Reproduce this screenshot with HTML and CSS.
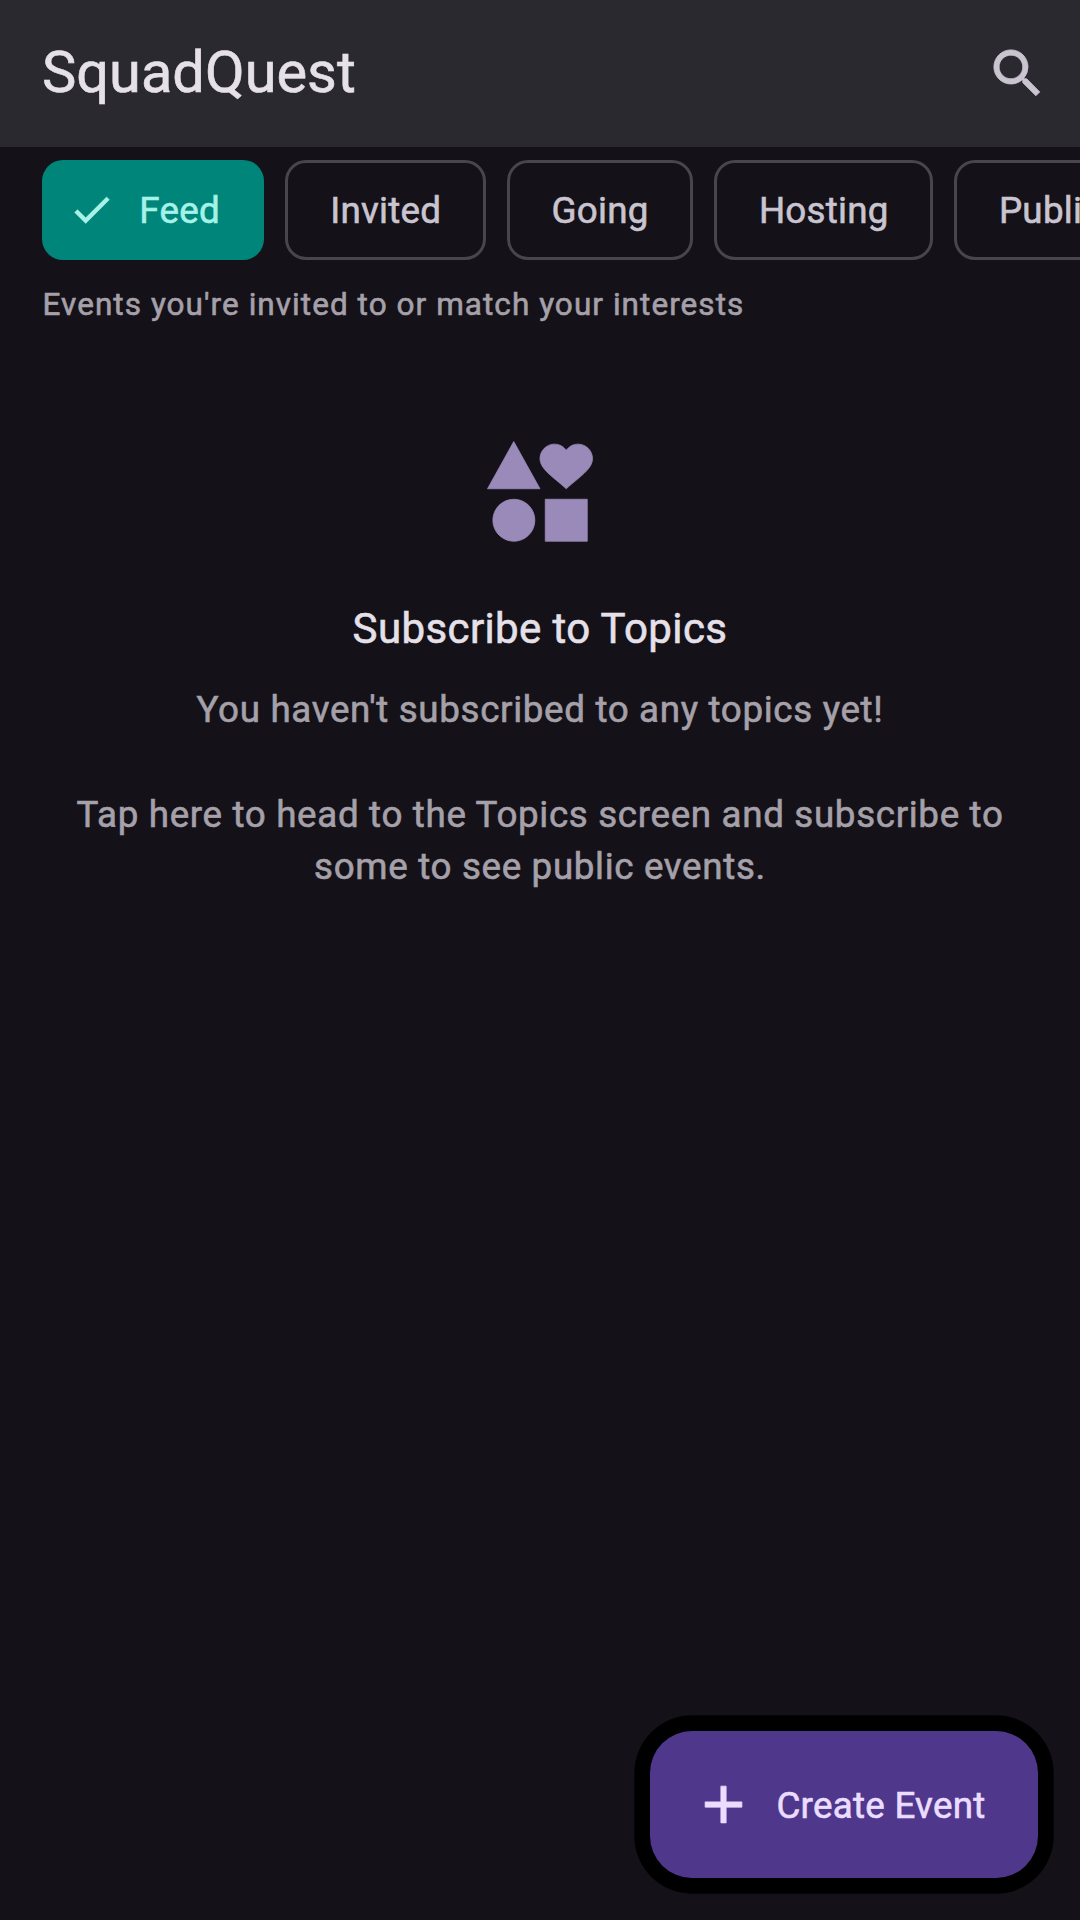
FILE: index.html
```html
<!DOCTYPE html>
<html lang="en">
<head>
<meta charset="utf-8">
<title>SquadQuest</title>
<link rel="stylesheet" href="styles.css">
</head>
<body>
<div class="screen">
  <header class="app-bar">
    <h1 class="app-title">SquadQuest</h1>
    <svg class="icon search" viewBox="0 0 24 24" aria-label="Search"><path d="M15.5 14h-.79l-.28-.27A6.47 6.47 0 0 0 16 9.5 6.5 6.5 0 1 0 9.5 16c1.61 0 3.09-.59 4.23-1.57l.27.28v.79l5 4.99L20.49 19l-4.99-5zm-6 0C7.01 14 5 11.99 5 9.5S7.01 5 9.5 5 14 7.01 14 9.5 11.99 14 9.5 14z"/></svg>
  </header>
  <nav class="chips">
    <div class="chip selected"><svg class="check" viewBox="0 0 24 24"><path d="M9 16.17L4.83 12l-1.42 1.41L9 19 21 7l-1.41-1.41z"/></svg><span>Feed</span></div>
    <div class="chip">Invited</div>
    <div class="chip">Going</div>
    <div class="chip">Hosting</div>
    <div class="chip">Public</div>
  </nav>
  <p class="caption">Events you're invited to or match your interests</p>
  <main class="empty">
    <svg class="interests" viewBox="0 0 24 24"><path d="M7.02 13c-2.21 0-4 1.79-4 4s1.79 4 4 4 4-1.79 4-4-1.79-4-4-4zM13 13v8h8v-8h-8zM7 2l-5 9h10L7 2zM19.25 2.5c-1.06 0-1.81.56-2.25 1.17-.44-.61-1.19-1.17-2.25-1.17C13.19 2.5 12 3.78 12 5.25c0 2 2.42 3.42 5 5.75 2.58-2.33 5-3.75 5-5.75 0-1.47-1.19-2.75-2.75-2.75z"/></svg>
    <h2 class="empty-title">Subscribe to Topics</h2>
    <p class="empty-text">You haven't subscribed to any topics yet!<br><br>Tap here to head to the Topics screen and subscribe to some to see public events.</p>
  </main>
  <div class="actions">
    <button class="fab"><svg class="icon" viewBox="0 0 24 24"><path d="M19 13h-6v6h-2v-6H5v-2h6V5h2v6h6v2z"/></svg><span class="fab-label">Create Event</span></button>
  </div>
</div>
</body>
</html>
```
FILE: styles.css
```css
* { box-sizing: border-box; margin: 0; }

body {
  background: #141218;
  font-family: Roboto, sans-serif;
  color: #e6e0e9;
  -webkit-text-stroke: .6px currentColor;
}

svg {
  display: block;
  flex: none;
  fill: currentColor;
  stroke: currentColor;
  stroke-width: .3;
}

.screen {
  width: 1080px;
  height: 1920px;
  display: flex;
  flex-direction: column;
  overflow: hidden;
}

.app-bar {
  flex: none;
  height: 147px;
  padding: 0 31.5px 1px 42px;
  display: flex;
  align-items: center;
  justify-content: space-between;
  background: #2b2930;
  color: #cac4d0;
}

.app-title {
  padding-bottom: 3px;
  font-size: 57.75px;
  font-weight: 400;
  line-height: 74px;
  color: #e6e0e9;
}

.icon { width: 63px; height: 63px; }

.chips {
  flex: none;
  display: flex;
  gap: 21px;
  padding: 13px 0 0 42px;
}

.chip {
  flex: none;
  height: 100px;
  padding: 1px 41.2px 0 42px;
  display: flex;
  align-items: center;
  border: 3px solid #49454f;
  border-radius: 21px;
  font-size: 36.75px;
  font-weight: 400;
  letter-spacing: .26px;
  color: #cac4d0;
}

.chip.selected {
  border: 0;
  padding: 0 44.3px 0 26px;
  gap: 24px;
  background: #00857b;
  color: #a5f2e7;
}

.check { width: 47.25px; height: 47.25px; }

.caption {
  padding: 24px 42.5px 0;
  font-size: 31.5px;
  line-height: 42px;
  letter-spacing: 1.05px;
  color: #a5a0a9;
}

.empty {
  flex: 1;
  padding: 104.5px 42px 0;
  display: flex;
  flex-direction: column;
  align-items: center;
  text-align: center;
}

.interests { width: 126px; height: 126px; color: #9a8ab9; stroke-width: .15; }

.empty-title {
  margin: 40.5px 0 23.5px;
  font-size: 42px;
  font-weight: 400;
  line-height: 63px;
  letter-spacing: .39px;
}

.empty-text {
  font-size: 36.75px;
  line-height: 52.5px;
  letter-spacing: .66px;
  color: #a5a0a9;
}

.actions {
  flex: none;
  display: flex;
  justify-content: flex-end;
  padding: 0 42px 42px;
}

.fab {
  height: 147px;
  padding: 0 52.5px 0 42px;
  display: flex;
  align-items: center;
  gap: 21px;
  border: 0;
  border-radius: 42px;
  box-shadow: 0 0 0 15.75px #000;
  background: #4f378b;
  color: #eaddff;
  font: 400 36.75px Roboto, sans-serif;
  letter-spacing: .26px;
}

.fab-label { padding-top: 2px; }
```
